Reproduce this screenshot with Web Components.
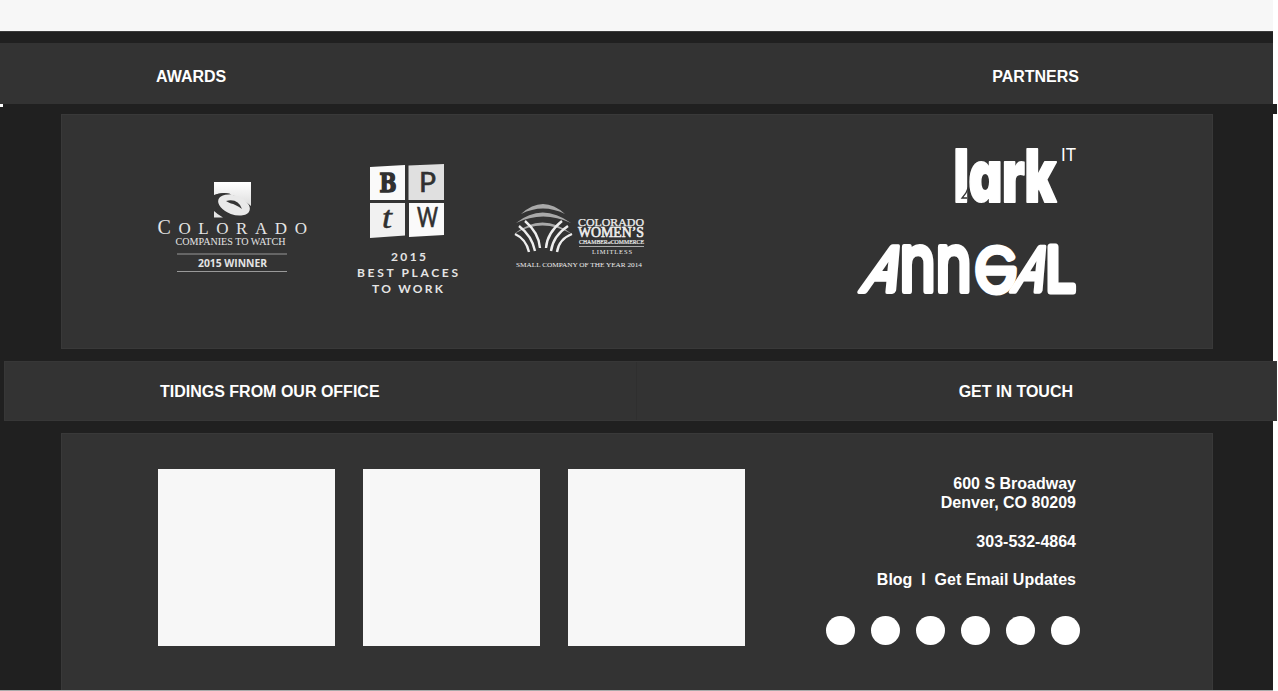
<!DOCTYPE html>
<html lang="en"><head><meta charset="utf-8"><title>Site footer</title>
<style>html,body{margin:0;height:691px;overflow:hidden;background:#fff}body{font:bold 16px/19.2px "Liberation Sans",Arial,sans-serif;color:#fff}</style></head>
<body><site-footer></site-footer>
<script>
const define=(name,html)=>{const t=document.createElement('template');t.innerHTML=html;customElements.define(name,class extends HTMLElement{constructor(){super();this.attachShadow({mode:'open'}).append(t.content.cloneNode(true));}});};

define('section-bar',`<style>
:host{display:flex;justify-content:space-between;box-sizing:border-box;background:#333;box-shadow:inset 0 0 0 1px #373737}
</style><slot name="left"></slot><slot name="right"></slot>`);

define('content-panel',`<style>
:host{display:flex;justify-content:space-between;box-sizing:border-box;width:1152px;margin-left:61px;background:#333;border:1px solid #393939}
</style><slot></slot>`);

define('watch-logo',`<style>:host{display:block}svg{display:block;overflow:visible}text{fill:#e4e4e4;font-weight:400}</style>
<svg width="156" height="96" viewBox="154 180 156 96">
<defs><linearGradient id="g" x2="0" y2="1"><stop stop-color="#fff"/><stop offset="1" stop-color="#ddd"/></linearGradient></defs>
<path fill="url(#g)" d="M214 182H251V206Q241 197 230 194.500Q223 192 214 195Z"/>
<path fill="#333" d="M213 196Q219 192 230 193.500L224 199Q213 205 218 215Z"/>
<ellipse cx="234" cy="205" rx="16.500" ry="9.500" transform="rotate(20 234 205)" fill="#e9e9e9"/>
<path fill="#333" d="M226 201Q238 198 242 209Q235 204 231 203.500Q228 202 226 201Z"/>
<path fill="#e5e5e5" d="M214 211Q217 214 223 217.500H214Z"/>
<g font-family="Liberation Serif,serif"><text x="157.500" y="233.500" font-size="17" textLength="149.500">
<tspan font-size="20">C</tspan>OLORADO</text>
<text x="175.500" y="244.500" font-size="10" textLength="110" lengthAdjust="spacingAndGlyphs">COMPANIES TO WATCH</text></g>
<path d="M177 254H287M177 271.500H287" stroke="#999"/>
<text x="198" y="267" font-family="Open Sans,sans-serif" font-size="10.500" textLength="69" lengthAdjust="spacingAndGlyphs" style="font-weight:700">2015 WINNER</text></svg>`);

define('places-logo',`<style>:host{display:block}svg{display:block;overflow:visible}.c{fill:#e5e5e5;font-family:Lato,sans-serif;font-size:12px;font-weight:700}.k{fill:#303030;stroke:#303030}</style>
<svg width="106" height="136" viewBox="354 161 106 136">
<path fill="#fafafa" d="M370 167L405 165V200H370ZM409 203H444V235L409 237Z"/>
<path fill="#e0e0e0" d="M408.500 165.500L444 164V200H408.500Z"/><path fill="#f1f1f1" d="M370 203H405V235.500L370 238Z"/>
<g class="k"><text x="379.500" y="192" font-family="DejaVu Serif,serif" font-size="26" font-weight="700" textLength="17" lengthAdjust="spacingAndGlyphs" stroke-width="1.600">B</text>
<text x="419" y="192" font-family="Lato,sans-serif" font-size="26" font-weight="400" textLength="17" lengthAdjust="spacingAndGlyphs" stroke-width=".6">P</text>
<text x="382" y="228" font-family="Liberation Serif,serif" font-size="31" font-weight="400" font-style="italic" textLength="10" lengthAdjust="spacingAndGlyphs" stroke-width=".5">t</text>
<text x="417" y="227" font-family="Lato,sans-serif" font-size="26" font-weight="400" textLength="21" lengthAdjust="spacingAndGlyphs" stroke-width=".7">W</text></g>
<text class="c" x="391" y="261" textLength="35">2015</text><text class="c" x="357" y="276.500" textLength="101">BEST PLACES</text><text class="c" x="372" y="293" textLength="71">TO WORK</text></svg>`);

define('women-logo',`<style>:host{display:block}svg{display:block;overflow:visible}text{fill:#eee;font-family:Liberation Serif,serif;font-weight:400}</style>
<svg width="134" height="72" viewBox="512 200 134 72">
<g fill="#a9a9a9"><path d="M521 214Q543 194 565 214Q543 203 521 214Z"/><path d="M516 223Q542 202 571 223Q543 210 516 223Z"/><path d="M514 234Q542 211 572 234Q542 217 514 234Z"/></g>
<g fill="none" stroke="#eee" stroke-width="2.400"><path d="M515 234Q526 239 529 252M519 226Q532 236 535 251M525 221Q539 233 540 248M572 234Q559 239 557 252M568 226Q553 236 551 251M562 221Q547 233 546 248"/></g>
<text x="578" y="226" font-size="11" textLength="66" lengthAdjust="spacingAndGlyphs" stroke="#eee" stroke-width=".25">COLORADO</text>
<text x="578" y="237" font-size="14" textLength="66" lengthAdjust="spacingAndGlyphs" stroke="#eee" stroke-width=".6">WOMEN’S</text>
<text x="579" y="244" font-size="6.500" textLength="65" lengthAdjust="spacingAndGlyphs" stroke="#eee" stroke-width=".2">CHAMBER<tspan font-size="4">of</tspan>COMMERCE</text>
<path d="M579 246.500H644" stroke="#aaa"/><text x="592" y="253.500" font-size="6.500" textLength="40">LIMITLESS</text>
<text x="516" y="267" font-size="7" textLength="126" lengthAdjust="spacingAndGlyphs">SMALL COMPANY OF THE YEAR 2014</text></svg>`);

define('partner-logos',`<style>:host{display:block}svg{display:block;overflow:visible}text{fill:#fff}.lark{font-weight:900;font-feature-settings:"cv11"}.ann{font-weight:400}</style>
<svg width="222" height="160" viewBox="857 140 222 160">
<g class="lark" font-family="Inter,sans-serif" font-size="73" stroke="#fff" stroke-width="2" stroke-linejoin="round"><text transform="translate(953.500 202) scale(.72 1)" x="0 20.800 67.300 98.600">lark</text></g>
<path d="M968.500 187L966 193L962 198H967" fill="none" stroke="#333" stroke-width="1.300"/>
<text x="1061" y="161" font-family="Liberation Sans,sans-serif" font-size="19" style="font-weight:400" textLength="15" lengthAdjust="spacingAndGlyphs">IT</text>
<g class="ann" font-family="Inter,sans-serif" stroke="#fff" stroke-width="6" stroke-linejoin="round">
<text transform="translate(859 291) skewX(-22) scale(.86 1)" font-size="60">A</text>
<text transform="translate(899.500 291) scale(.77 1)" font-size="80">n</text>
<text transform="translate(935.500 291) scale(.77 1)" font-size="80">n</text>
<text transform="translate(974 248.500) scale(.96 -1)" font-size="79" font-weight="200" stroke-width="7">e</text>
<text transform="translate(1010 291) skewX(-20) scale(.76 1)" font-size="60" stroke-width="5.500">A</text>
<text transform="translate(1046 291) scale(.87 1)" font-size="60" stroke-width="7">L</text></g></svg>`);

define('photo-tiles',`<style>:host{display:grid;grid-template-columns:repeat(3,176.500px);gap:28.700px}i{display:block;height:177px;background:#f7f7f7}</style><i></i><i></i><i></i>`);

define('contact-info',`<style>:host{display:flex;flex-direction:column;align-items:flex-end;text-align:right}p{margin:0 4px 19.200px 0;white-space:pre}
.dots{display:flex;gap:16.200px;margin-top:7.500px}.dots i{width:28.800px;height:28.800px;border-radius:50%;background:#fff}</style>
<p>600 S Broadway<br>Denver, CO 80209</p><p>303-532-4864</p><p>Blog  I  Get Email Updates</p><div class="dots"><i></i><i></i><i></i><i></i><i></i><i></i></div>`);

define('site-footer',`<style>
:host{display:block;width:1278px;height:691px}
.top{height:31px;width:1273px;background:#f7f7f7}
main{width:1273px;height:658px;background:#202020;border-top:1px solid #3a3a3a;border-bottom:1px solid #aaa;display:flow-root}
.first{height:61px;margin-top:11px;padding:24px 194px 0 156px;box-shadow:none}
.seam{display:flex;width:1277px;height:10px;background:#202020}.seam i{width:3px;height:3px;background:#fff}
.awards{height:235px}.awards watch-logo{margin:65px 0 0 92px}.awards places-logo{margin:46px 0 0 44px}.awards women-logo{margin:85px 0 0 52px}.awards partner-logos{margin:25px 133px 0 auto}
.second{width:1273px;height:60px;margin:12px 0 12px 4px;padding:21px 204px 0 156px;background:linear-gradient(90deg,transparent 632px,#2f2f2f 632px,#2f2f2f 633px,transparent 633px),#333}
.contact{height:257px;border-bottom:0}.contact photo-tiles{margin:35px 0 0 96px}.contact contact-info{margin:40px 132px 0 0}
</style>
<div class="top"></div><main>
<section-bar class="first"><span slot="left">AWARDS</span><span slot="right">PARTNERS</span></section-bar>
<div class="seam"><i></i></div>
<content-panel class="awards"><watch-logo></watch-logo><places-logo></places-logo><women-logo></women-logo><partner-logos></partner-logos></content-panel>
<section-bar class="second"><span slot="left">TIDINGS FROM OUR OFFICE</span><span slot="right">GET IN TOUCH</span></section-bar>
<content-panel class="contact"><photo-tiles></photo-tiles><contact-info></contact-info></content-panel>
</main>`);
</script></body></html>
